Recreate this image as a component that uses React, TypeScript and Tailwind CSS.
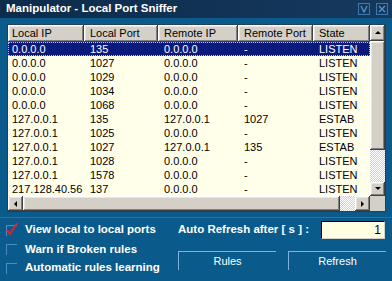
import React from 'react';

const rows = [
  ['0.0.0.0', '135', '0.0.0.0', '-', 'LISTEN'],
  ['0.0.0.0', '1027', '0.0.0.0', '-', 'LISTEN'],
  ['0.0.0.0', '1029', '0.0.0.0', '-', 'LISTEN'],
  ['0.0.0.0', '1034', '0.0.0.0', '-', 'LISTEN'],
  ['0.0.0.0', '1068', '0.0.0.0', '-', 'LISTEN'],
  ['127.0.0.1', '135', '127.0.0.1', '1027', 'ESTAB'],
  ['127.0.0.1', '1025', '0.0.0.0', '-', 'LISTEN'],
  ['127.0.0.1', '1027', '127.0.0.1', '135', 'ESTAB'],
  ['127.0.0.1', '1028', '0.0.0.0', '-', 'LISTEN'],
  ['127.0.0.1', '1578', '0.0.0.0', '-', 'LISTEN'],
  ['217.128.40.56', '137', '0.0.0.0', '-', 'LISTEN'],
];

const headers = ['Local IP', 'Local Port', 'Remote IP', 'Remote Port', 'State'];
const widths = ['w-[76px] pl-[4px]', 'w-[74px] pl-[6px]', 'w-[80px] pl-[6px]', 'w-[75px] pl-[6px]', 'w-[57px] pl-[6px]'];

const bevel =
  'bg-[#d4d0c8] shadow-[inset_-1px_-1px_#404040,inset_1px_1px_#ffffff,inset_-2px_-2px_#808080,inset_2px_2px_#e8e6e0]';
const checker = 'bg-[repeating-conic-gradient(#d4d0c8_0_25%,#ffffff_0_50%)] bg-size-[2px_2px]';

const Arrow: React.FC<{ dir: 'up' | 'down' | 'left' | 'right' }> = ({ dir }) => {
  const pts = {
    up: '1,5 4,2 7,5',
    down: '1,2 4,5 7,2',
    left: '5,1 2,4 5,7',
    right: '2,1 5,4 2,7',
  }[dir];
  return (
    <svg width="8" height="8" viewBox="0 0 8 8">
      <polygon points={pts} fill="#000" />
    </svg>
  );
};

const CheckBox: React.FC<{ checked?: boolean }> = ({ checked }) => (
  <div className="relative w-[11px] h-[11px] border-t border-l border-[#4b8dbf]">
    {checked && (
      <svg className="absolute -left-[2px] -top-[4px]" width="14" height="14" viewBox="0 0 14 14">
        <path d="M2 8 L5 12 L12 1" stroke="#e0202a" strokeWidth="2" fill="none" />
      </svg>
    )}
  </div>
);

export default function App() {
  return (
    <div
      className="w-[392px] h-[281px] bg-[#0a5b8c] flex flex-col overflow-hidden text-black"
      style={{ fontFamily: '"Liberation Sans", Arial, sans-serif' }}
    >
      <div className="h-[18px] bg-gradient-to-r from-[#0e2b4a] to-[#15395e] flex items-center justify-between pl-[6px] pr-[4px]">
        <span className="text-white font-bold text-[11.5px]">Manipulator - Local Port Sniffer</span>
        <div className="flex gap-[6px]">
          <svg width="12" height="12" viewBox="0 0 12 12">
            <rect x="0.5" y="0.5" width="11" height="11" fill="none" stroke="#3f78ae" />
            <path d="M3 3 L6 9 L9 3" stroke="#5b93c8" strokeWidth="1.3" fill="none" />
          </svg>
          <svg width="12" height="12" viewBox="0 0 12 12">
            <rect x="0.5" y="0.5" width="11" height="11" fill="none" stroke="#3f78ae" />
            <path d="M3 3 L9 9 M9 3 L3 9" stroke="#5b93c8" strokeWidth="1.3" fill="none" />
          </svg>
        </div>
      </div>

      <div className="ml-[7px] mt-[6px] w-[379px] border border-[#20405e] bg-[#ffffea] text-[11px] leading-none">
        <div className="flex">
          <div className="w-[362px]">
            <div className="flex h-[17px]">
              {headers.map((h, i) => (
                <div key={h} className={`${widths[i]} ${bevel} flex items-center`}>
                  {h}
                </div>
              ))}
            </div>
            {rows.map((r, ri) => (
              <div
                key={ri}
                className={`flex h-[14px] items-center ${
                  ri === 0 ? 'bg-[#0c1a7c] text-white outline-1 outline-dotted outline-[#c0c0ff] -outline-offset-1' : ''
                }`}
              >
                {r.map((c, ci) => (
                  <div key={ci} className={widths[ci]}>
                    {c}
                  </div>
                ))}
              </div>
            ))}
          </div>
          <div className="w-[15px] flex flex-col">
            <div className={`h-[16px] ${bevel} flex items-center justify-center`}>
              <Arrow dir="up" />
            </div>
            <div className={`h-[109px] ${bevel}`} />
            <div className={`h-[32px] ${checker}`} />
            <div className={`h-[14px] ${bevel} flex items-center justify-center`}>
              <Arrow dir="down" />
            </div>
          </div>
        </div>
        <div className="flex h-[15px]">
          <div className={`w-[15px] ${bevel} flex items-center justify-center`}>
            <Arrow dir="left" />
          </div>
          <div className={`w-[317px] ${bevel}`} />
          <div className={`w-[15px] ${checker}`} />
          <div className={`w-[15px] ${bevel} flex items-center justify-center`}>
            <Arrow dir="right" />
          </div>
          <div className="w-[15px] bg-[#d4d0c8]" />
        </div>
      </div>

      <div className="flex mt-[5px] border-t border-[#2a72a6] pt-[2px]">
        <div className="w-[172px] flex flex-col text-white font-bold text-[11.5px] pl-[6px]">
          <div className="flex items-center gap-[8px] h-[20px]">
            <CheckBox checked />
            <span>View local to local ports</span>
          </div>
          <div className="flex items-center gap-[8px] h-[19px]">
            <CheckBox />
            <span>Warn if Broken rules</span>
          </div>
          <div className="flex items-center gap-[8px] h-[18px]">
            <CheckBox />
            <span>Automatic rules learning</span>
          </div>
        </div>
        <div className="flex flex-col pl-[6px]">
          <div className="flex items-center h-[20px]">
            <span className="text-white font-bold text-[11.5px] w-[143px]">Auto Refresh after [ s ] :</span>
            <div className="w-[64px] h-[18px] bg-[#ffffe2] border-t border-l border-black border-b border-r border-b-[#d4d0c8] border-r-[#d4d0c8] text-[12px] text-right pr-[3px] leading-[17px]">
              1
            </div>
          </div>
          <div className="flex gap-[12px] mt-[11px]">
            <div className="w-[98px] h-[19px] border-t border-l border-[#7fb2d8] text-white text-[11px] flex items-center justify-center">
              Rules
            </div>
            <div className="w-[98px] h-[19px] border-t border-l border-[#7fb2d8] text-white text-[11px] flex items-center justify-center">
              Refresh
            </div>
          </div>
        </div>
      </div>
    </div>
  );
}
